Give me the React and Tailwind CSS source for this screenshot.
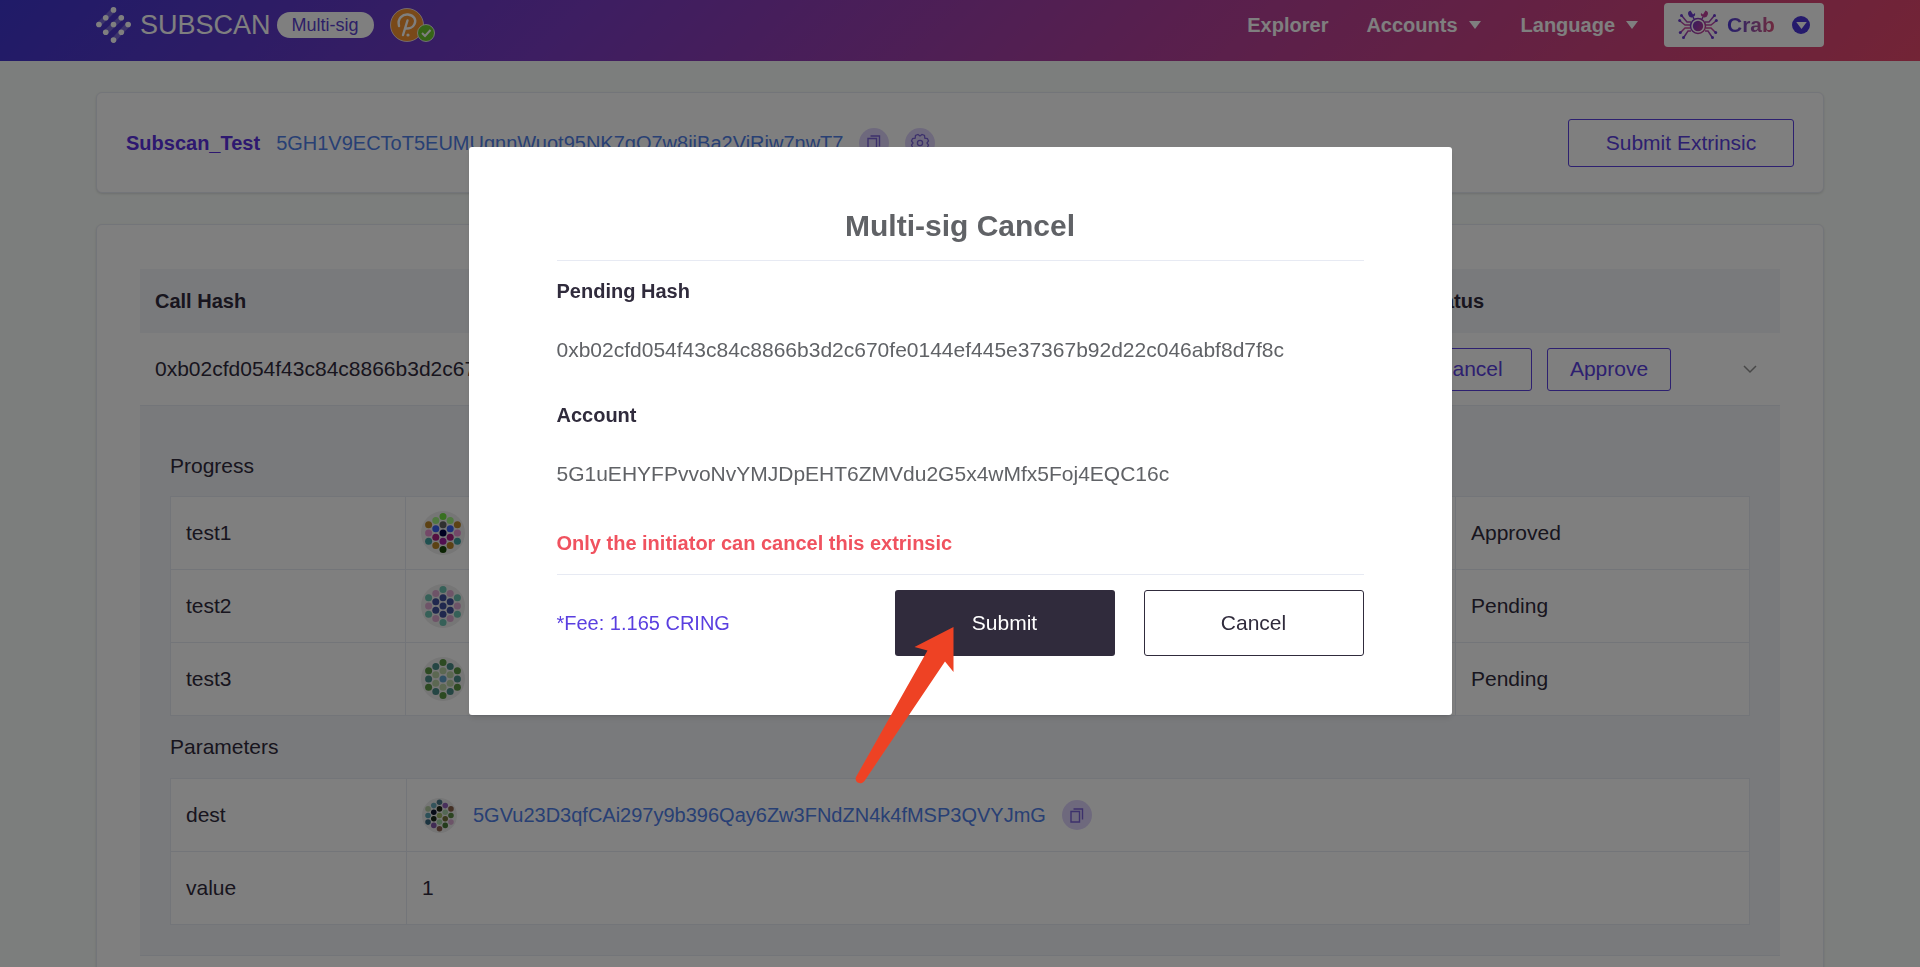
const SANS = "font-['Liberation_Sans',Arial,sans-serif]";

function LogoMark() {
  const dots = [[18, 3], [10, 11], [26, 11], [3, 18], [18, 18], [33, 18], [10, 26], [26, 26], [18, 34]];
  return (
    <svg viewBox="0 0 37 37" className="h-9 w-9" aria-hidden="true">
      <g stroke="#fff" strokeOpacity="0.25" strokeWidth="5" strokeLinecap="round">
        <path d="M3 18 18 3M10 26 26 11M18 34 33 18" />
      </g>
      {dots.map(([x, y]) => (
        <circle key={`${x}-${y}`} cx={x} cy={y} r="2.9" fill="#fff" />
      ))}
    </svg>
  );
}

function PolkadotBadge() {
  return (
    <svg viewBox="0 0 46 36" className="h-9 w-[46px]" aria-hidden="true">
      <circle cx="17" cy="18" r="16.5" fill="#f39332" stroke="#fff" strokeOpacity="0.7" />
      <path d="M9 19C7 11 13 7 18 7.500 24 8 26.500 13 24.500 17 23 20.500 19 21.800 16 21.500M17.500 13.500 13 28" fill="none" stroke="#fff" strokeWidth="2.400" strokeLinecap="round" />
      <circle cx="18" cy="28" r="1.600" fill="#fff" />
      <circle cx="36" cy="26" r="8.500" fill="#6cc62f" stroke="#fff" strokeOpacity="0.8" />
      <path d="m32 26 3 3 5.500-6" fill="none" stroke="#fff" strokeWidth="2" />
    </svg>
  );
}

function Caret() {
  return (
    <svg viewBox="0 0 12 8" className="h-2 w-3" aria-hidden="true">
      <path d="M0 0h12L6 8z" fill="currentColor" />
    </svg>
  );
}

function CrabIcon() {
  return (
    <svg viewBox="0 0 40 30" className="h-[30px] w-10" aria-hidden="true">
      <defs>
        <linearGradient id="crab" gradientUnits="userSpaceOnUse" x1="8" x2="32" y1="8" y2="24">
          <stop offset="0" stopColor="#5034d8" />
          <stop offset="1" stopColor="#e04080" />
        </linearGradient>
        <linearGradient id="crab-legs" gradientUnits="userSpaceOnUse" x1="0" x2="0" y1="0" y2="30">
          <stop offset="0" stopColor="#6a3ad0" />
          <stop offset="0.6" stopColor="#d0489a" />
          <stop offset="1" stopColor="#6a3ad0" />
        </linearGradient>
      </defs>
      <g fill="none" stroke="url(#crab-legs)" strokeWidth="1.500">
        <path d="M13 12H9L4 6M12 15H7l-5-4M12 18H7l-4 4M13 21h-3l-4 6M27 12h4l5-6M28 15h5l5-4M28 18h5l4 4M27 21h3l4 6" />
      </g>
      <g fill="none" stroke="url(#crab)" strokeWidth="1.500">
        <circle cx="20" cy="16" r="7.500" />
        <path d="m16 9-1-2M24 9l1-2" />
      </g>
      <circle cx="20" cy="16" r="5.200" fill="url(#crab)" />
      <g fill="#6a3ad0">
        <circle cx="3.500" cy="5.500" r="1.500" /><circle cx="1.700" cy="10.500" r="1.500" /><circle cx="2.300" cy="22.500" r="1.500" /><circle cx="5.500" cy="27.500" r="1.500" />
        <circle cx="36.500" cy="5.500" r="1.500" /><circle cx="38.300" cy="10.500" r="1.500" /><circle cx="37.700" cy="22.500" r="1.500" /><circle cx="34.500" cy="27.500" r="1.500" />
        <path d="M12.500 0.500a3.500 3.500 0 1 0 4.500 2.500l-2 1.500z" />
      </g>
      <path d="M27.500 0.500a3.500 3.500 0 1 1-4.500 2.500l2 1.500z" fill="#c0409a" />
    </svg>
  );
}

function CopyButton() {
  return (
    <button type="button" aria-label="Copy address" className="flex h-[30px] w-[30px] shrink-0 items-center justify-center rounded-full bg-[#ddd3fa] text-[#7a62d8]">
      <svg viewBox="0 0 14 15" className="h-[15px] w-[14px]" fill="none" stroke="currentColor" strokeWidth="1.400" aria-hidden="true">
        <path d="M1 3.500h8.500v10.500H1zM3.500 1H12.500V11.500" />
      </svg>
    </button>
  );
}

const POSITIONS = [
  [0, -2], [-1, -1.5], [1, -1.5], [-2, -1], [0, -1], [2, -1], [-1, -0.5], [1, -0.5], [-2, 0], [0, 0],
  [2, 0], [-1, 0.5], [1, 0.5], [-2, 1], [0, 1], [2, 1], [-1, 1.5], [1, 1.5], [0, 2],
];

function Identicon({ colors, className }) {
  return (
    <svg viewBox="-22 -22 44 44" className={className} aria-hidden="true">
      <circle r="22" fill="#ececec" />
      {POSITIONS.map(([x, y], i) => (
        <circle key={i} cx={x * 7.2} cy={y * 8.3} r="3.5" fill={colors[i]} />
      ))}
    </svg>
  );
}

const G = "#5a9444", T = "#4a8c88", L = "#b8d0a4";
const P = "#dca8d0", A = "#6cc0b0", N = "#40509c";
const MEMBERS = [
  { name: "test1", status: "Approved", colors: ["#70e040", "#a0f080", "#a0f080", "#b88428", "#606060", "#b88428", "#3860f0", "#3860f0", "#e890d0", "#000040", "#e890d0", "#a82080", "#a82080", "#40a0a0", "#a020a0", "#40a0a0", "#b88428", "#b88428", "#184808"] },
  { name: "test2", status: "Pending", colors: [A, P, P, A, N, A, N, N, P, N, P, N, N, A, N, A, P, P, A] },
  { name: "test3", status: "Pending", colors: [G, T, T, G, L, G, L, L, T, "#60a0c8", T, L, L, G, L, G, T, T, G] },
];
const DEST = ["#487888", "#68a8b8", "#9060b8", "#b0c8a0", "#202818", "#886048", "#101830", "#a8d0a8", "#58a0b0", "#a0b868", "#588840", "#182818", "#707038", "#386880", "#a0d0a0", "#d8a8d0", "#8058a8", "#487838", "#886050"];

function Header() {
  return (
    <header className="flex h-[61px] items-start justify-between bg-[linear-gradient(135deg,#3f36d0_0%,#7b3cc4_30%,#b03f9c_60%,#e6486c_100%)] px-[5%] text-white">
      <div className="flex h-[50px] items-center">
        <a href="#home" className="flex items-center gap-2">
          <LogoMark />
          <span className="text-[27px] leading-8">SUBSCAN</span>
        </a>
        <span className="ml-[6px] rounded-full bg-white px-[15px] text-[18px] leading-[26px] text-[#5a40d0]">Multi-sig</span>
        <span className="ml-4"><PolkadotBadge /></span>
      </div>
      <nav className="flex h-[50px] items-center text-[20px] font-bold">
        <a href="#explorer">Explorer</a>
        <button type="button" className="ml-[38px] flex items-center gap-[11px]">Accounts <Caret /></button>
        <button type="button" className="ml-10 flex items-center gap-[11px]">Language <Caret /></button>
        <button type="button" className="ml-[26px] flex h-11 w-40 items-center rounded-sm bg-white px-[14px] text-[21px]">
          <CrabIcon />
          <span className="ml-[9px] bg-linear-to-r from-[#4a34d8] to-[#e0507a] bg-clip-text text-transparent">Crab</span>
          <span className="ml-auto flex h-[18px] w-[18px] items-center justify-center rounded-full bg-[#4a34d8]">
            <svg viewBox="0 0 12 8" className="h-[7px] w-[11px]" aria-hidden="true"><path d="M0 0h12L6 8z" fill="#fff" /></svg>
          </span>
        </button>
      </nav>
    </header>
  );
}

const outline = "rounded-[3px] border border-[#5a40e0] text-[#5a40e0]";

function AccountCard() {
  return (
    <section className="flex h-[101px] items-center justify-between rounded-md border border-[#e7eaf3] bg-white px-[29px] shadow-sm">
      <div className="flex items-center gap-4 text-[20px]">
        <h1 className="font-bold text-[#5a30e0]">Subscan_Test</h1>
        <a href="#account" className="text-[#5080e8]">5GH1V9ECToT5EUMUgnnWuot95NK7gQ7w8jjBa2ViRjw7nwT7</a>
        <CopyButton />
        <button type="button" aria-label="Settings" className="flex h-[30px] w-[30px] items-center justify-center rounded-full bg-[#ddd3fa] text-[#7a62d8]">
          <svg viewBox="0 0 20 20" className="h-5 w-5" fill="none" stroke="currentColor" strokeWidth="1.300" aria-hidden="true">
            <path d="M8 1.500 10 3l2-1.500 2.500 1 .3 2.600 2.600.4 1.100 2.500L17 10l1.500 2-1.100 2.500-2.600.4-.3 2.600-2.500 1L10 17l-2 1.500-2.500-1-.3-2.600-2.600-.4L1.500 12 3 10 1.500 8l1.100-2.500 2.600-.4.3-2.600z" />
            <circle cx="10" cy="10" r="2.600" />
          </svg>
        </button>
      </div>
      <button type="button" className={`h-12 w-[226px] text-[21px] ${outline}`}>Submit Extrinsic</button>
    </section>
  );
}

const cell = "border border-[#e7eaf3] px-[15px]";

function Details() {
  return (
    <div className="border-y border-[#e7eaf3] bg-[#f3f5f9] px-[30px] py-[30px]">
      <h2 className="h-[60px] leading-[60px]">Progress</h2>
      <table className="w-full table-fixed border-collapse bg-white">
        <tbody>
          {MEMBERS.map((m) => (
            <tr key={m.name} className="h-[73px]">
              <td className={`w-[235px] ${cell}`}>{m.name}</td>
              <td className={cell}><Identicon colors={m.colors} className="h-11 w-11" /></td>
              <td className={`w-[294px] ${cell}`}>{m.status}</td>
            </tr>
          ))}
        </tbody>
      </table>
      <h2 className="h-[62px] leading-[62px]">Parameters</h2>
      <table className="w-full table-fixed border-collapse bg-white">
        <tbody>
          <tr className="h-[73px]">
            <td className={`w-[236px] ${cell}`}>dest</td>
            <td className={cell}>
              <div className="flex items-center gap-4">
                <Identicon colors={DEST} className="h-[35px] w-[35px]" />
                <a href="#dest" className="text-[20px] text-[#5080e8]">5GVu23D3qfCAi297y9b396Qay6Zw3FNdZN4k4fMSP3QVYJmG</a>
                <CopyButton />
              </div>
            </td>
          </tr>
          <tr className="h-[73px]">
            <td className={cell}>value</td>
            <td className={cell}>1</td>
          </tr>
        </tbody>
      </table>
    </div>
  );
}

function CallsCard() {
  return (
    <section className="mt-[31px] rounded-md border border-[#e7eaf3] bg-white px-[43px] py-11 shadow-sm">
      <table className="w-full table-fixed border-collapse text-left text-[21px] text-[#302b3c]">
        <thead>
          <tr className="h-16 bg-[#f3f5f9]">
            <th className="px-[15px] text-[20px]">Call Hash</th>
            <th className="w-[372px] px-[15px] text-[20px]">Status</th>
          </tr>
        </thead>
        <tbody>
          <tr className="h-[72px]">
            <td className="truncate px-[15px]">0xb02cfd054f43c84c8866b3d2c670fe0144ef445e37367b92d22c046abf8d7f8c</td>
            <td className="pr-[22px]">
              <div className="flex items-center">
                <button type="button" className={`h-[43px] w-[124px] ${outline}`}>Cancel</button>
                <button type="button" className={`ml-[15px] h-[43px] w-[124px] ${outline}`}>Approve</button>
                <button type="button" aria-label="Collapse row" className="ml-auto text-[#909090]">
                  <svg viewBox="0 0 16 16" className="h-4 w-4" fill="none" stroke="currentColor" strokeWidth="1.500" aria-hidden="true"><path d="m2 5 6 6 6-6" /></svg>
                </button>
              </div>
            </td>
          </tr>
          <tr>
            <td colSpan={2} className="p-0"><Details /></td>
          </tr>
        </tbody>
      </table>
    </section>
  );
}

function CancelDialog() {
  return (
    <div className="fixed inset-0 flex items-start justify-center bg-black/50 pt-[147px]">
      <div role="dialog" aria-modal="true" aria-labelledby="dialog-title" className="relative w-[983px] max-w-full rounded-[3px] bg-white px-[88px] pt-[62px] pb-[59px] text-[21px] shadow-md">
        <h2 id="dialog-title" className="border-b border-[#e7eaf3] pb-[17px] text-center text-[30px] leading-[34px] font-bold text-[#606266]">Multi-sig Cancel</h2>
        <h3 className="mt-[15px] text-[20px] leading-[30px] font-bold text-[#302b3c]">Pending Hash</h3>
        <p className="mt-[29px] leading-[30px] text-[#606266]">0xb02cfd054f43c84c8866b3d2c670fe0144ef445e37367b92d22c046abf8d7f8c</p>
        <h3 className="mt-[35px] text-[20px] leading-[30px] font-bold text-[#302b3c]">Account</h3>
        <p className="mt-[29px] leading-[30px] text-[#606266]">5G1uEHYFPvvoNvYMJDpEHT6ZMVdu2G5x4wMfx5Foj4EQC16c</p>
        <p className="mt-[39px] border-b border-[#e7eaf3] pb-4 text-[20px] leading-[30px] font-bold text-[#f0525f]">Only the initiator can cancel this extrinsic</p>
        <div className="mt-[15px] flex items-center">
          <p className="mr-auto text-[20px] text-[#5a3fe0]">*Fee: 1.165 CRING</p>
          <button type="button" className="h-[66px] w-[220px] rounded-[3px] bg-[#302b3c] text-white">Submit</button>
          <button type="button" className="ml-[29px] h-[66px] w-[220px] rounded-[3px] border border-[#302b3c] text-[#302b3c]">Cancel</button>
        </div>
        <svg viewBox="0 0 100 158" className="pointer-events-none absolute top-[479px] left-[385px] h-[158px] w-[100px]" aria-hidden="true">
          <path d="M99.500 1 60.500 21l13 3.500L2 151c-2 5 4.500 9 8.500 4L91 35.500l8.500 10.500z" fill="#ee4224" />
        </svg>
      </div>
    </div>
  );
}

export default function App() {
  return (
    <div className={`h-screen overflow-hidden bg-[#f9fdfa] ${SANS}`}>
      <Header />
      <main className="px-[5%] pt-[31px]">
        <AccountCard />
        <CallsCard />
      </main>
      <CancelDialog />
    </div>
  );
}
